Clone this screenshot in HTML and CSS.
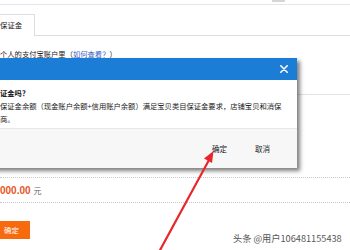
FILE: index.html
```html
<!DOCTYPE html>
<html>
<head>
<meta charset="utf-8">
<link rel="stylesheet" href="styles.css">
</head>
<body>
<div class="page">
  <div class="topbar"><span class="scrollnub"></span></div>
  <div class="tab-row">
    <div class="tab">保证金</div>
    <div class="tab-fill"></div>
  </div>
  <div class="info">个人的支付宝账户里（<a class="link">如何查看？</a>）</div>
  <div class="section"></div>
  <div class="amount-row"><span class="amount">000.00</span> <span class="unit">元</span></div>
  <div class="action-row"><span class="btn-orange">确定</span></div>

  <div class="modal">
    <div class="modal-head">
      <svg class="close" width="8" height="8" viewBox="0 0 8 8">
        <path d="M0.8 0.8 L7.2 7.2 M7.2 0.8 L0.8 7.2" stroke="#ffffff" stroke-width="1.6" stroke-linecap="round"/>
      </svg>
    </div>
    <div class="modal-body">
      <div class="modal-title">证金吗？</div>
      <div class="modal-text">保证金余额（现金账户余额+信用账户余额）满足宝贝类目保证金要求，店铺宝贝和消保</div>
      <div class="modal-text">商。</div>
    </div>
    <div class="modal-foot">
      <span class="mbtn">确定</span>
      <span class="mbtn">取消</span>
    </div>
  </div>

  <svg class="arrow" width="350" height="250" viewBox="0 0 350 250">
    <line x1="159" y1="252" x2="209" y2="160" stroke="#e8262b" stroke-width="2.2" stroke-linecap="round"/>
    <polygon points="213.5,151 212,163 204,158.5" fill="#e8262b"/>
  </svg>

  <div class="watermark">头条 @用户106481155438</div>
</div>
</body>
</html>
```

FILE: styles.css
```css
html, body {
  margin: 0;
  padding: 0;
  background: #ffffff;
}
body {
  width: 350px;
  height: 250px;
  overflow: hidden;
  font-family: "Noto Sans CJK SC", "Liberation Sans", sans-serif;
  color: #222222;
}
.page {
  position: relative;
  width: 350px;
  height: 250px;
  overflow: hidden;
}
.topbar {
  height: 4px;
  border-bottom: 1px solid #e4e6e9;
  display: flex;
}
.scrollnub {
  margin-left: 272px;
  width: 13px;
  height: 2px;
  background: #d6d6d6;
}
.tab-row {
  margin-top: 9px;
  display: flex;
  height: 22px;
}
.tab {
  width: 35px;
  box-sizing: border-box;
  border-top: 1px solid #d9dee4;
  border-right: 1px solid #d9dee4;
  font-size: 7.4px;
  line-height: 20px;
  color: #222;
}
.tab-fill {
  flex: 1;
  border-bottom: 1px solid #d9dee4;
}
.info {
  margin-top: 12px;
  font-size: 7.3px;
  line-height: 12px;
  color: #222;
}
.link {
  color: #3a62c8;
}
.section {
  height: 34px;
  border-bottom: 1px solid #e2e2e2;
}
.amount-row {
  margin-top: 82px;
  border-top: 1px dotted #c8c8c8;
  border-bottom: 1px dotted #c8c8c8;
  height: 26px;
  display: flex;
  align-items: center;
  gap: 3px;
  padding-top: 1px;
  box-sizing: border-box;
}
.amount {
  font-family: "Liberation Sans", sans-serif;
  font-weight: bold;
  font-size: 10px;
  color: #e8561e;
}
.unit {
  font-size: 8px;
  color: #666;
}
.action-row {
  margin-top: 18px;
  display: flex;
}
.btn-orange {
  width: 30px;
  height: 18px;
  background: #f86a0e;
  color: #fff;
  font-size: 7.4px;
  line-height: 18px;
  padding-left: 4px;
  box-sizing: border-box;
}
.modal {
  position: absolute;
  left: -20px;
  top: 58px;
  width: 317px;
  height: 110px;
  background: #ffffff;
  box-shadow: 3px 3px 4px rgba(0, 0, 0, 0.5);
  display: flex;
  flex-direction: column;
}
.modal-head {
  height: 22px;
  background: #1b7dd6;
  display: flex;
  justify-content: flex-end;
  align-items: center;
  padding-right: 9px;
}
.close {
  display: block;
}
.modal-body {
  padding: 7px 0 2px 20px;
  font-size: 7.3px;
  line-height: 13px;
  color: #222;
  border-bottom: 1px solid #e8e8e8;
}
.modal-title {
  font-weight: bold;
  color: #111;
}
.modal-foot {
  flex: 1;
  background: #f7f7f7;
  display: flex;
  justify-content: flex-end;
  align-items: center;
  gap: 28px;
  padding-right: 27px;
}
.mbtn {
  font-size: 7.5px;
  color: #222;
  line-height: 12px;
}
.arrow {
  position: absolute;
  left: 0;
  top: 0;
}
.watermark {
  position: absolute;
  left: 233px;
  top: 232px;
  font-size: 9.2px;
  line-height: 12px;
  color: #555;
  white-space: nowrap;
  text-shadow: 0 0 1px #fff;
}
```
